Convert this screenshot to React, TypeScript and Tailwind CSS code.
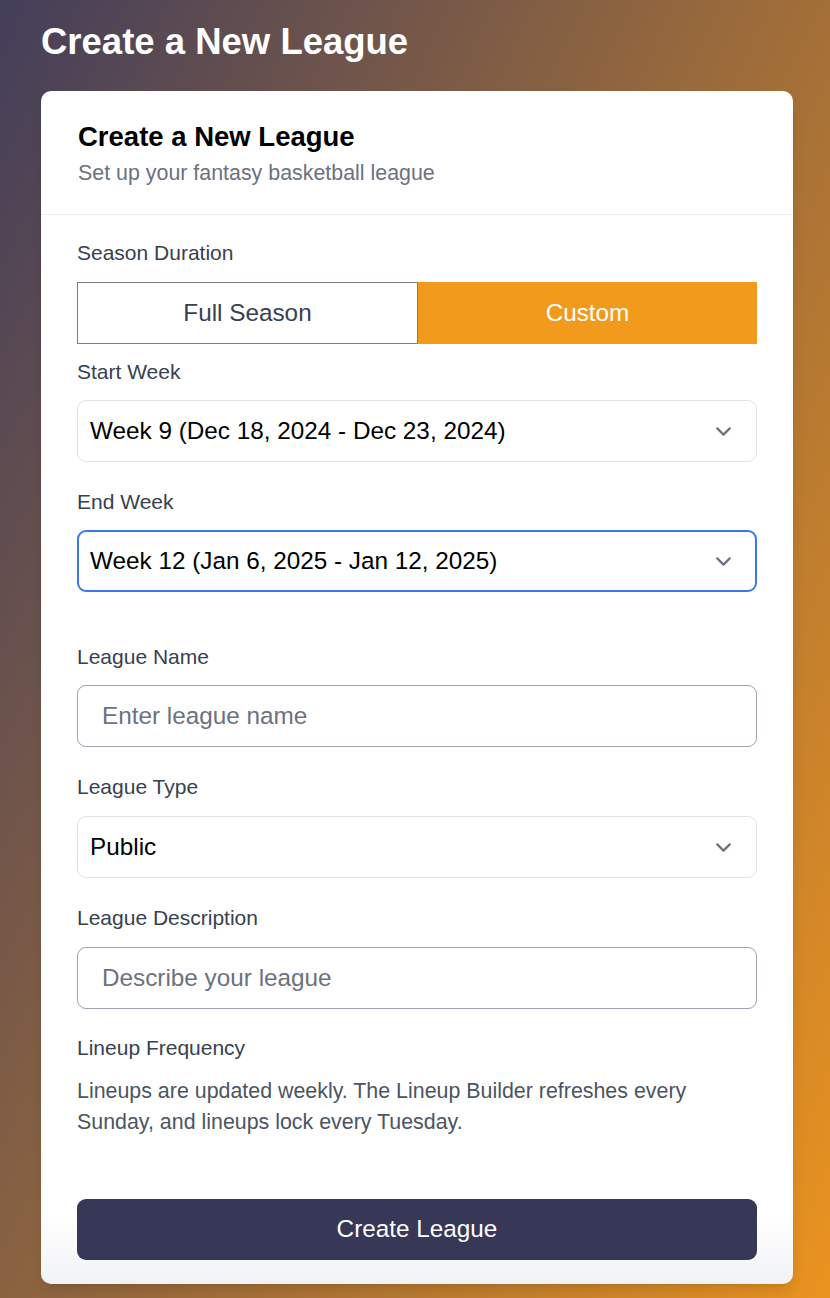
import { ChevronDown } from 'lucide-react';

const font = { fontFamily: '"Liberation Sans", Arial, sans-serif' };

function Label({ children }: { children: React.ReactNode }) {
  return <div className="text-[21px] leading-[28px] text-[#374151]">{children}</div>;
}

function SelectBox({ value, focused }: { value: string; focused?: boolean }) {
  return (
    <div
      className={
        focused
          ? 'flex h-[62px] items-center justify-between rounded-[9px] border-2 border-[#3b76ef] pl-[11px] pr-[19px]'
          : 'flex h-[62px] items-center justify-between rounded-[9px] border border-[#e2e4e8] pl-[12px] pr-[20px]'
      }
    >
      <span className="text-[24.3px] text-black">{value}</span>
      <ChevronDown className="h-[25px] w-[25px] text-[#6b7280]" strokeWidth={2.1} />
    </div>
  );
}

function TextBox({ placeholder }: { placeholder: string }) {
  return (
    <div className="flex h-[62px] items-center rounded-[9px] border border-[#9ca3af] px-[24px]">
      <span className="text-[24.3px] text-[#6b7280]">{placeholder}</span>
    </div>
  );
}

export default function App() {
  return (
    <div
      className="min-h-[1298px] bg-[linear-gradient(115deg,#433e5a,#ea931f)] px-[41px] pt-[24px] pb-[15px]"
      style={font}
    >
      <h1 className="text-[36.5px] leading-[36px] font-bold text-white">Create a New League</h1>

      <div className="mt-[31px] w-[752px] rounded-[10px] bg-[linear-gradient(to_bottom,#ffffff_94%,#f1f2f4)] shadow-lg">
        {/* Header */}
        <div className="border-b border-[#eeeff1] px-[37px] pt-[30px] pb-[27px]">
          <h2 className="text-[27.5px] leading-[32px] font-bold text-black">Create a New League</h2>
          <p className="mt-[6px] text-[21.4px] leading-[28px] text-[#6b7280]">
            Set up your fantasy basketball league
          </p>
        </div>

        {/* Body */}
        <div className="px-[36px] pt-[24px] pb-[24px]">
          <Label>Season Duration</Label>
          <div className="mt-[15px] flex h-[62px]">
            <div className="flex flex-1 items-center justify-center border border-[#7a7f8c] bg-white text-[24.3px] text-[#374151]">
              Full Season
            </div>
            <div className="flex flex-1 items-center justify-center bg-[#f29a1c] text-[24.3px] text-white">
              Custom
            </div>
          </div>

          <div className="mt-[14px]">
            <Label>Start Week</Label>
            <div className="mt-[14px]">
              <SelectBox value="Week 9 (Dec 18, 2024 - Dec 23, 2024)" />
            </div>
          </div>

          <div className="mt-[26px]">
            <Label>End Week</Label>
            <div className="mt-[14px]">
              <SelectBox value="Week 12 (Jan 6, 2025 - Jan 12, 2025)" focused />
            </div>
          </div>

          <div className="mt-[51px]">
            <Label>League Name</Label>
            <div className="mt-[14px]">
              <TextBox placeholder="Enter league name" />
            </div>
          </div>

          <div className="mt-[26px]">
            <Label>League Type</Label>
            <div className="mt-[15px]">
              <SelectBox value="Public" />
            </div>
          </div>

          <div className="mt-[26px]">
            <Label>League Description</Label>
            <div className="mt-[15px]">
              <TextBox placeholder="Describe your league" />
            </div>
          </div>

          <div className="mt-[25px]">
            <Label>Lineup Frequency</Label>
            <p className="mt-[14px] text-[21.4px] leading-[31px] text-[#4b5563]">
              Lineups are updated weekly. The Lineup Builder refreshes every Sunday, and lineups lock every
              Tuesday.
            </p>
          </div>

          <button className="mt-[61px] flex h-[61px] w-full items-center justify-center rounded-[9px] bg-[#373757] text-[24.3px] text-white">
            Create League
          </button>
        </div>
      </div>
    </div>
  );
}
